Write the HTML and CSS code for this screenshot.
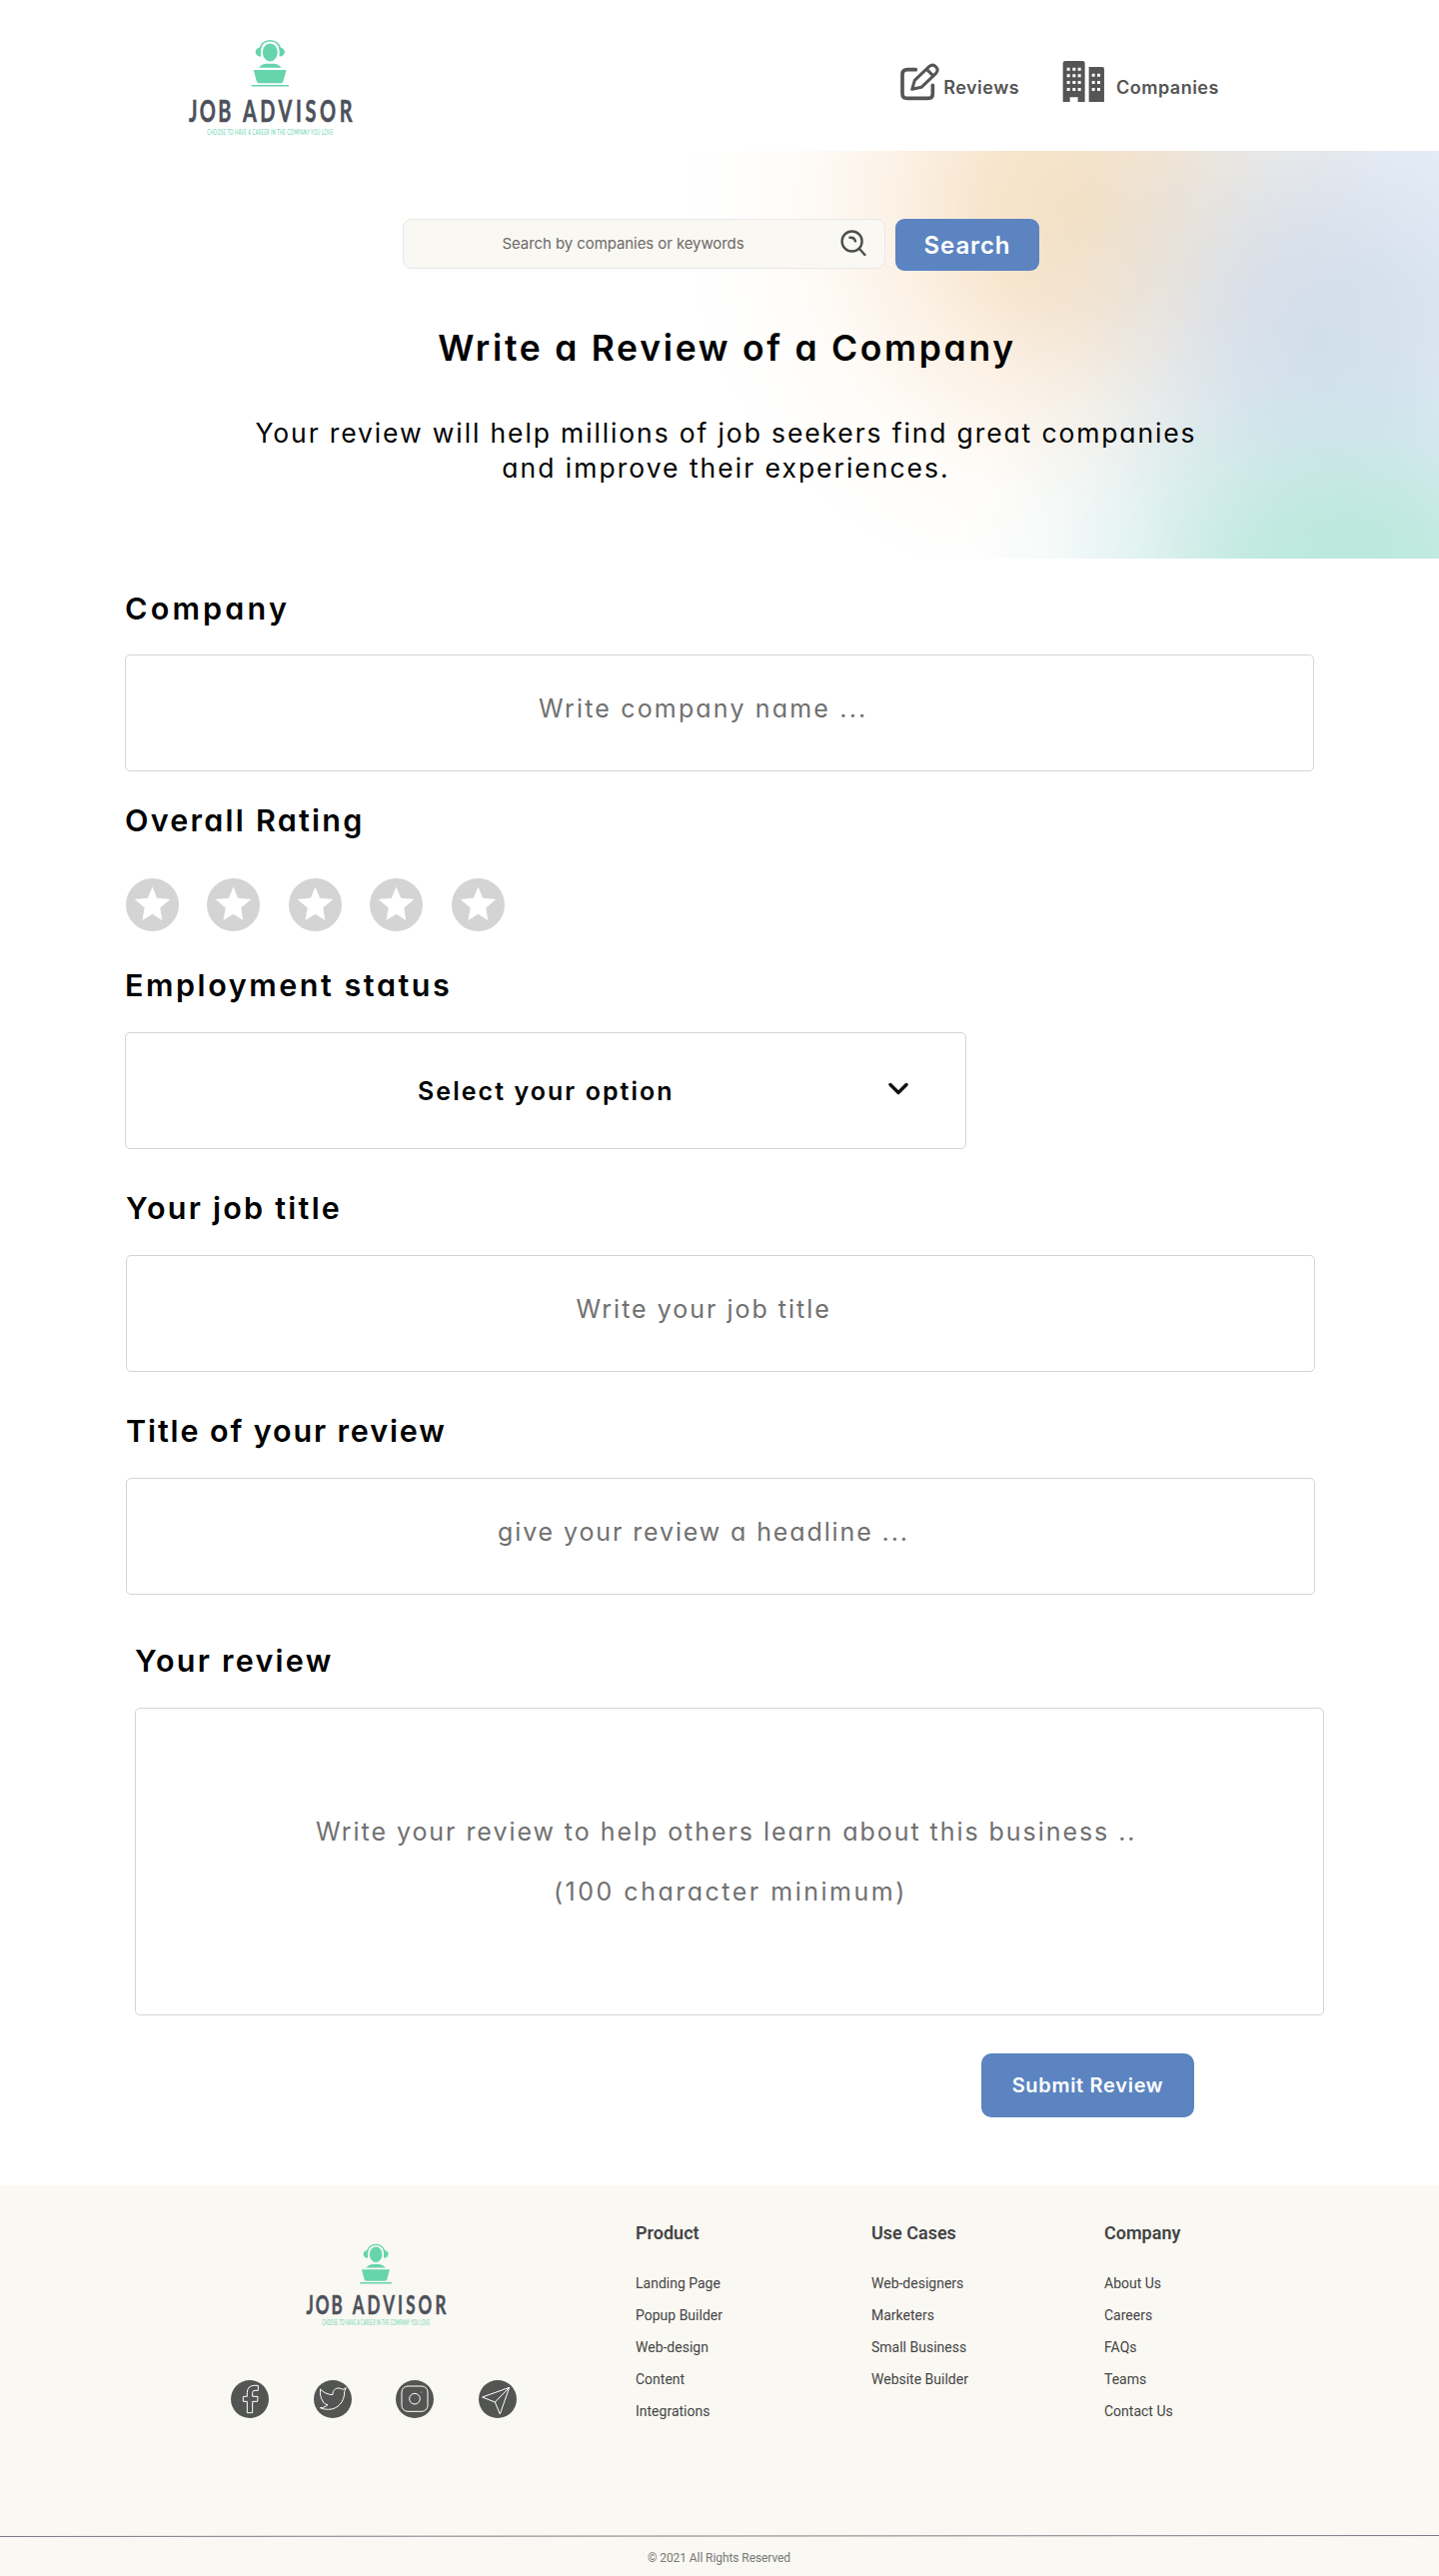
FILE: index.html
```html
<!DOCTYPE html>
<html lang="en">
<head>
<meta charset="utf-8">
<title>Job Advisor – Write a Review</title>
<link rel="stylesheet" href="styles.css">
</head>
<body>
<svg class="defs" width="0" height="0" aria-hidden="true">
  <symbol id="logo" viewBox="0 0 170 100">
    <g fill="#66d4ad">
      <ellipse cx="84.3" cy="14.4" rx="7.4" ry="9"/>
      <path d="M75 9.500v9c-3 0-5.300-1.800-5.300-4.500s2.300-4.500 5.300-4.500zM93.600 9.500v9c3 0 5.300-1.800 5.300-4.500s-2.300-4.500-5.300-4.500z"/>
      <path d="M73 29.700c2-2.600 5-4 7.500-4h7.600c2.500 0 5.500 1.400 7.500 4z"/>
      <path d="M67.700 32h32.800l-3 11c-.5 1.700-1.200 2.300-2.800 2.300H73.500c-1.600 0-2.300-.6-2.800-2.300z"/>
      <path d="M65.700 46.900h37.200v1.700H65.700z"/>
    </g>
    <path d="M74.300 12C74.300 6 79 2.800 84.300 2.800S94.300 6 94.300 12" fill="none" stroke="#66d4ad" stroke-width="1.500"/>
    <g class="logo-name" transform="scale(.64 1)">
      <text x="4.700" y="84.300" textLength="66" lengthAdjust="spacing">JOB</text>
      <text x="89" y="84.300" textLength="171" lengthAdjust="spacing">ADVISOR</text>
    </g>
    <text class="logo-tag" transform="scale(.5 1)" x="42.600" y="97" textLength="252" lengthAdjust="spacing">CHOOSE TO HAVE A CAREER IN THE COMPANY YOU LOVE</text>
  </symbol>
  <symbol id="star" viewBox="0 0 53 53">
    <circle cx="26.500" cy="26.500" r="26.500" fill="#d4d4d4"/>
    <path d="M26.500 8.500l4.600 11.300 13.300 1.200-10.100 8.400 1.900 12.600-9.700-6.200-10 6.200 2.200-12.600L8.600 21l13.300-1.200z" fill="#fff"/>
  </symbol>
</svg>

<header class="header">
  <svg class="header-logo" role="img" aria-label="Job Advisor"><use href="#logo"/></svg>
  <nav class="nav">
    <a class="nav-item">
      <svg class="icon-review" viewBox="60 65 125 120" fill="none" stroke="#555" stroke-linecap="round" stroke-linejoin="round">
        <path d="M109 88H84q-15 0-15 15v57q0 14 15 14h62q14 0 14-14v-25" stroke-width="11"/>
        <path d="M98 147l8-27 44-42q10-8 19 1 10 9 1 20l-44 42zM142 87l19 19" stroke-width="9"/>
      </svg>
      <span>Reviews</span>
    </a>
    <a class="nav-item nav-companies">
      <svg class="icon-companies" viewBox="550 60 130 128" fill="#555">
        <path d="M552 70q0-7 7-7h52q7 0 7 7v116h-21v-14h-24v14h-21zM630 81h40q6 0 6 6v99h-46z"/>
        <path fill="#fff" d="M564 83h9v9h-9zM581 83h9v9h-9zM597 83h9v9h-9zM564 103h9v9h-9zM581 103h9v9h-9zM597 103h9v9h-9zM564 123h9v9h-9zM581 123h9v9h-9zM597 123h9v9h-9zM564 144h9v9h-9zM581 144h9v9h-9zM597 144h9v9h-9zM639 101h9v9h-9zM655 101h9v9h-9zM639 123h9v9h-9zM655 123h9v9h-9zM639 144h9v9h-9zM655 144h9v9h-9z"/>
      </svg>
      <span>Companies</span>
    </a>
  </nav>
</header>

<section class="hero">
  <form class="search">
    <div class="search-box">
      <input type="text" placeholder="Search by companies or keywords">
      <svg viewBox="0 0 26 26" fill="none" stroke="#4d4d4d" stroke-width="2.400" stroke-linecap="round">
        <circle cx="11.600" cy="11.500" r="10"/>
        <path d="M18.800 18.800l5.600 6.200M9.500 7.800q4.500-.8 5.500 3.600"/>
      </svg>
    </div>
    <button type="button" class="search-btn">Search</button>
  </form>
  <h1>Write a Review of a Company</h1>
  <p>Your review will help millions of job seekers find great companies<br><span class="line-two">and improve their experiences.</span></p>
</section>

<main class="form">
  <section class="group">
    <h2 class="h-company">Company</h2>
    <input class="field f-company" type="text" placeholder="Write company name ...">
  </section>
  <section class="group group-rating">
    <h2>Overall Rating</h2>
    <div class="stars">
      <svg><use href="#star"/></svg><svg><use href="#star"/></svg><svg><use href="#star"/></svg><svg><use href="#star"/></svg><svg><use href="#star"/></svg>
    </div>
  </section>
  <section class="group group-status">
    <h2 class="h-status">Employment status</h2>
    <div class="field select">
      <span>Select your option</span>
      <svg viewBox="0 0 20 13" fill="none" stroke="#111" stroke-width="3.400" stroke-linecap="round" stroke-linejoin="round"><path d="M2 2.500l8 8 8-8"/></svg>
    </div>
  </section>
  <section class="group group-job">
    <h2>Your job title</h2>
    <input class="field f-job" type="text" placeholder="Write your job title">
  </section>
  <section class="group group-title">
    <h2 class="h-title">Title of your review</h2>
    <input class="field f-title" type="text" placeholder="give your review a headline ...">
  </section>
  <section class="group group-review">
    <h2>Your review</h2>
    <div class="field review"><span>Write your review to help others learn about this business ..</span><span class="minimum">(100 character minimum)</span></div>
  </section>
  <button type="button" class="submit">Submit Review</button>
</main>

<footer class="footer">
  <div class="footer-main">
    <div class="brand">
      <svg class="footer-logo" role="img" aria-label="Job Advisor"><use href="#logo"/></svg>
      <div class="social">
        <svg viewBox="0 0 114 114"><circle cx="57" cy="57" r="57"/><path d="M82 16H70Q49 17 49 38v11H37v15h12v34h16V64h15l1-15H65V38q0-7 7-7h10z"/></svg>
        <svg viewBox="0 0 114 114"><circle cx="57" cy="57" r="57"/><path d="M20 27q14 16 37 17c-1-13 8-21 19-20 5 0 9 4 12 4l9-5-5 11c1 30-20 54-48 54-10 0-18-2-25-5 10 0 18-4 23-9-9-2-13-5-15-11-7-10-9-23-7-36z"/></svg>
        <svg viewBox="0 0 114 114"><circle cx="57" cy="57" r="57"/><rect x="18" y="18" width="78" height="76" rx="18"/><circle class="ring" cx="57" cy="56" r="16"/><path d="M77 36h2"/></svg>
        <svg viewBox="0 0 114 114"><circle cx="57" cy="57" r="57"/><path d="M11 51l81-29-28 80-15-36zM49 66l43-44"/></svg>
      </div>
    </div>
    <div class="col col-product">
      <h3>Product</h3>
      <ul><li>Landing Page</li><li>Popup Builder</li><li>Web-design</li><li>Content</li><li>Integrations</li></ul>
    </div>
    <div class="col col-cases">
      <h3>Use Cases</h3>
      <ul><li>Web-designers</li><li>Marketers</li><li>Small Business</li><li>Website Builder</li></ul>
    </div>
    <div class="col">
      <h3>Company</h3>
      <ul><li>About Us</li><li>Careers</li><li>FAQs</li><li>Teams</li><li>Contact Us</li></ul>
    </div>
  </div>
  <svg class="rule" viewBox="0 0 1440 2"><path d="M0 1.500L1440 .5" stroke="#7d7c85"/></svg>
  <p class="copyright">© 2021 All Rights Reserved</p>
</footer>
</body>
</html>
```
FILE: styles.css
```css
* { box-sizing: border-box; }

body {
  margin: 0;
  width: 1440px;
  background: #fff;
  color: #000;
  font-family: Inter, "Open Sans", sans-serif;
}

h1, h2, h3, p, ul { margin: 0; padding: 0; }
ul { list-style: none; }
svg { display: block; flex: none; }
.defs { display: none; }
input, button { font-family: inherit; font-feature-settings: inherit; border: 0; outline: 0; }

.logo-name text { font: 700 31px Lato, sans-serif; fill: #4c515b; stroke: #4c515b; stroke-width: .6px; }
.logo-tag { font: 400 8.300px Lato, sans-serif; fill: #66d4ad; }

/* Header */
.header {
  display: flex;
  height: 151px;
  padding: 38px 0 0 186px;
}
.header-logo { width: 170px; height: 100px; }
.nav { display: flex; margin: 22px 0 0 544px; }
.nav-item {
  display: flex;
  gap: 2.500px;
  color: #555;
  font-size: 18px;
  font-weight: 600;
  line-height: 20px;
  letter-spacing: .5px;
}
.nav-item span { margin-top: 17.500px; }
.nav-companies { margin-left: 43px; gap: 10.500px; }
.icon-review { width: 41.700px; height: 40px; margin-top: 2px; }
.icon-companies { width: 43.300px; height: 42.700px; }

/* Hero */
.hero {
  height: 408px;
  padding-top: 68px;
  font-feature-settings: "cv11";
  background:
    radial-gradient(ellipse 400px 270px at 1350px 425px, rgba(180,232,216,.92), rgba(182,232,218,.78) 25%, rgba(190,232,225,.45) 50%, rgba(200,233,236,.15) 75%, rgba(205,233,238,0)),
    radial-gradient(ellipse 330px 400px at 1320px 190px, rgba(204,218,234,.85), rgba(206,219,235,.7) 25%, rgba(210,223,238,.4) 50%, rgba(215,228,240,.14) 75%, rgba(215,228,240,0)),
    radial-gradient(ellipse 400px 390px at 1085px 60px, rgba(245,222,190,.95), rgba(246,223,194,.82) 25%, rgba(249,229,206,.48) 50%, rgba(253,240,222,.16) 75%, rgba(255,246,234,0)),
    radial-gradient(ellipse 330px 560px at 1440px 130px, rgba(220,230,246,.75), rgba(220,230,246,.4) 50%, rgba(220,230,246,0)),
    #fff;
}
.search {
  display: flex;
  gap: 10px;
  height: 52px;
  padding-left: 403px;
  font-feature-settings: normal;
}
.search-box {
  display: flex;
  width: 483px;
  height: 50px;
  border: 1px solid #e8e8e8;
  border-radius: 9px;
  background: #f9f8f3;
}
.search-box input {
  width: 436.500px;
  padding: 0 0 2px 98.500px;
  background: none;
  font-size: 15px;
  letter-spacing: -.08px;
}
.search-box input::placeholder { color: #6b6a68; opacity: 1; }
.search-box svg { width: 26px; height: 26px; margin-top: 10px; }
.search-btn {
  width: 144px;
  height: 52px;
  padding: 0;
  border-radius: 9px;
  background: #5b84c1;
  color: #fff;
  font-size: 24px;
  font-weight: 600;
  letter-spacing: .9px;
}
.hero h1 {
  margin-top: 53px;
  padding-left: 15px;
  font-size: 35.500px;
  font-weight: 600;
  line-height: 50px;
  letter-spacing: 2.700px;
  text-align: center;
}
.hero p {
  margin-top: 41.500px;
  padding-left: 13px;
  font-size: 26.500px;
  line-height: 35px;
  letter-spacing: 1.870px;
  text-align: center;
}
.line-two { letter-spacing: 2px; }

/* Form */
.form {
  display: flex;
  flex-direction: column;
  height: 1628px;
  padding: 30px 0 0 125px;
  font-feature-settings: "cv11";
}
.group { width: 1190px; }
.group h2 {
  font-size: 30.500px;
  font-weight: 600;
  line-height: 39px;
  padding-bottom: 1px;
  letter-spacing: 2.250px;
}
.group .h-company { letter-spacing: 3.200px; }
.group .h-status { letter-spacing: 2.550px; }
.group .h-title { letter-spacing: 1.880px; }
.field {
  display: block;
  width: 1190px;
  height: 117px;
  margin-top: 27px;
  padding: 0 0 9px;
  border: 1px solid #d4d4d4;
  border-radius: 5px;
  background: #fff;
  color: #707070;
  font-size: 25px;
  letter-spacing: 1.950px;
}
.field::placeholder { color: #707070; opacity: 1; }
.f-company { margin-top: 26px; padding-left: 413px; letter-spacing: 2.170px; }
.f-job { padding-left: 449.500px; letter-spacing: 2px; }
.f-title { padding-left: 371px; letter-spacing: 1.880px; }
.group-rating { margin-top: 29px; }
.stars { display: flex; gap: 28.400px; margin: 38px 0 0 1px; }
.stars svg { width: 53px; height: 53px; }
.group-status { margin-top: 34px; }
.select {
  display: flex;
  align-items: center;
  width: 842px;
  padding: 0 0 0 292px;
  color: #000;
  font-weight: 600;
  letter-spacing: 2.050px;
}
.select span { width: 471px; }
.select svg { width: 20px; height: 13px; margin-bottom: 5px; }
.group-job { margin: 39px 0 0 1px; }
.group-title { margin: 39px 0 0 1px; }
.group-review { margin: 46px 0 0 10px; }
.review {
  display: flex;
  flex-direction: column;
  height: 308px;
  padding: 93px 0 0 180px;
  line-height: 60px;
}
.minimum { padding-left: 238px; letter-spacing: 2.500px; }
.submit {
  width: 213px;
  height: 64px;
  margin: 38px 0 0 857px;
  padding: 0;
  border-radius: 10px;
  background: #5b84c1;
  color: #fff;
  font-size: 20px;
  font-weight: 600;
  letter-spacing: .7px;
  font-feature-settings: normal;
}

/* Footer */
.footer {
  height: 391px;
  background: #f9f8f3;
  font-family: Roboto, sans-serif;
  color: #444;
}
.footer-main { display: flex; height: 350px; padding: 36px 0 0 231px; }
.brand { width: 405px; padding-top: 21.300px; }
.footer-logo { width: 145.400px; height: 85.500px; margin-left: 73px; }
.social { display: flex; gap: 44.700px; margin-top: 52px; }
.social svg { width: 38px; height: 38px; fill: none; stroke: #fff; stroke-width: 3; stroke-linejoin: round; }
.social circle:first-child { fill: #535553; stroke: none; }
.col-product { width: 236px; }
.col-cases { width: 233px; }
.col h3 { font-size: 18px; font-weight: 600; line-height: 24px; }
.col ul { margin-top: 22px; }
.col li { font-size: 14px; line-height: 32px; }
.rule { width: 1440px; height: 2px; }
.copyright {
  padding: 11px 0 0 648px;
  color: #777;
  font-size: 12px;
  line-height: 20px;
  letter-spacing: -.08px;
}
```
